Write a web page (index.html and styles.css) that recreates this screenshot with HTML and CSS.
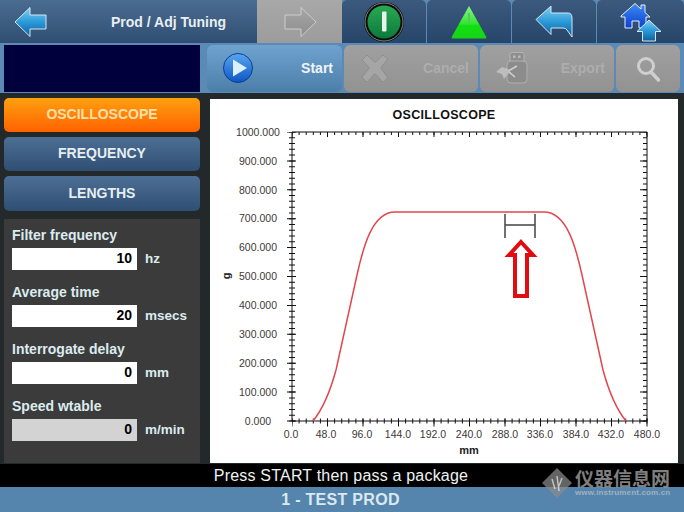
FILE: index.html
```html
<!DOCTYPE html>
<html lang="en">
<head>
  <meta charset="UTF-8">
  <title>Prod / Adj Tuning</title>
  <link rel="stylesheet" href="styles.css">
</head>
<body>
  <div class="screen">
    <svg class="defs" width="0" height="0">
      <defs>
        <linearGradient id="blueArrow" x1="0" y1="0" x2="0" y2="1">
          <stop offset="0" stop-color="#7fd0f5"/>
          <stop offset=".5" stop-color="#2b9ad8"/>
          <stop offset="1" stop-color="#0f5f9e"/>
        </linearGradient>
        <linearGradient id="greyArrow" x1="0" y1="0" x2="0" y2="1">
          <stop offset="0" stop-color="#a6a6a6"/>
          <stop offset="1" stop-color="#8e8e8e"/>
        </linearGradient>
        <linearGradient id="greenTri" x1="0" y1="0" x2="0" y2="1">
          <stop offset="0" stop-color="#8cf08c"/>
          <stop offset=".55" stop-color="#2ee82e"/>
          <stop offset=".6" stop-color="#12e012"/>
          <stop offset="1" stop-color="#16d416"/>
        </linearGradient>
        <linearGradient id="greenDisc" x1="0" y1="0" x2="0" y2="1">
          <stop offset="0" stop-color="#2aa855"/>
          <stop offset="1" stop-color="#0b7a3a"/>
        </linearGradient>
        <linearGradient id="playDisc" x1="0" y1="0" x2="0" y2="1">
          <stop offset="0" stop-color="#5aa6f0"/>
          <stop offset="1" stop-color="#0c56c4"/>
        </linearGradient>
        <linearGradient id="homeBlue" x1="0" y1="0" x2="0" y2="1">
          <stop offset="0" stop-color="#3f8cf2"/>
          <stop offset="1" stop-color="#0a3fd0"/>
        </linearGradient>
      </defs>
    </svg>

    <!-- Top navigation -->
    <div class="topbar">
      <div class="title-cell">
        <svg class="back-icon" width="34" height="32" viewBox="0 0 34 32">
          <path d="M1 16 16 1.500V9H32V23H16V30.500Z" fill="url(#blueArrow)" stroke="#d5e6f2" stroke-width="1"/>
        </svg>
        <span class="page-title">Prod / Adj Tuning</span>
      </div>
      <div class="grey-cell">
        <svg width="34" height="32" viewBox="0 0 34 32">
          <path d="M33 16 18 1.500V9H2V23H18V30.500Z" fill="url(#greyArrow)" stroke="#cdcdcd" stroke-width="1"/>
        </svg>
      </div>
      <div class="nav-cell">
        <svg width="42" height="42" viewBox="0 0 42 42">
          <circle cx="21" cy="21" r="20" fill="#0d0d0d"/>
          <circle cx="21" cy="21" r="19" fill="none" stroke="#9aa59d" stroke-width=".8"/>
          <circle cx="21" cy="21" r="16.500" fill="url(#greenDisc)"/>
          <rect x="19" y="10.500" width="4.500" height="20" rx="1" fill="#e9f4ec"/>
        </svg>
      </div>
      <div class="nav-cell">
        <svg class="tri-icon" width="36" height="34" viewBox="0 0 36 34">
          <path d="M18 1 35 31.500Q36 33.500 34 33.500H2Q0 33.500 1 31.500Z" fill="url(#greenTri)"/>
          <rect x="17" y="8" width="2" height="11" fill="#5cc45c"/>
        </svg>
      </div>
      <div class="nav-cell">
        <svg width="38" height="33" viewBox="0 0 38 33">
          <path d="M1 14.500 16 1V8H33Q37 8 37 13V32L32 25Q31 23 28 23H16V29.500Z" fill="url(#blueArrow)" stroke="#d5e6f2" stroke-width="1"/>
        </svg>
      </div>
      <div class="nav-cell nav-last">
        <svg width="42" height="40" viewBox="0 0 42 40">
          <path d="M1 14 15 1.500 21 7V3H25V10.500L30 15H26V26H19V19H12V26H5V15H1Z" fill="url(#homeBlue)" stroke="#e6eef8" stroke-width="1"/>
          <path d="M29 18 41 29.500H35.500V39H22.500V29.500H17Z" fill="url(#blueArrow)" stroke="#d5e6f2" stroke-width="1"/>
        </svg>
      </div>
    </div>

    <!-- Action toolbar -->
    <div class="toolbar">
      <div class="display-box"></div>
      <div class="tool tool-on">
        <svg width="30" height="30" viewBox="0 0 30 30">
          <circle cx="15" cy="15" r="14.500" fill="url(#playDisc)" stroke="#0b3f92" stroke-width="1"/>
          <path d="M10 6.500 24 15 10 23.500Z" fill="#dcf0fd"/>
        </svg>
        <span>Start</span>
      </div>
      <div class="tool">
        <svg width="32" height="32" viewBox="0 0 32 32">
          <path d="M3 8 8 3 16 10.500 24 3 29 7 21.500 16 29 26 24 30 16 21.500 8 30 3 25 10.500 16Z" fill="#a6a6a6" stroke="#8a8a8a" stroke-width=".8"/>
        </svg>
        <span>Cancel</span>
      </div>
      <div class="tool">
        <svg width="34" height="32" viewBox="0 0 34 32">
          <rect x="15" y="0.500" width="14" height="11" rx="2" fill="#8e8e8e" stroke="#b4b4b4"/>
          <rect x="18" y="3.500" width="2.500" height="2.500" fill="#b8b8b8"/>
          <rect x="23" y="3.500" width="2.500" height="2.500" fill="#b8b8b8"/>
          <rect x="12" y="9" width="20" height="22" rx="4" fill="#8c8c8c" stroke="#b0b0b0"/>
          <path d="M13 19 22 14M13 19 20 25" fill="none" stroke="#d2d2d2" stroke-width="1.500"/>
          <path d="M1 20 7 15 13 17 14 21 9 27 7 22Z" fill="#bdbdbd"/>
        </svg>
        <span>Export</span>
      </div>
      <div class="tool tool-icon">
        <svg width="24" height="28" viewBox="0 0 24 28">
          <circle cx="10" cy="11" r="7.500" fill="none" stroke="#cfcfcf" stroke-width="3"/>
          <path d="M15 17 22.500 25" stroke="#cfcfcf" stroke-width="3.500" stroke-linecap="round"/>
        </svg>
      </div>
    </div>

    <div class="main">
      <!-- Left column: tabs and settings -->
      <div class="sidebar">
        <div class="tab tab-active">OSCILLOSCOPE</div>
        <div class="tab">FREQUENCY</div>
        <div class="tab tab-last">LENGTHS</div>

        <div class="settings">
          <div class="field">
            <div class="field-label">Filter frequency</div>
            <div class="field-row">
              <div class="field-value">10</div>
              <span class="field-unit">hz</span>
            </div>
          </div>
          <div class="field">
            <div class="field-label">Average time</div>
            <div class="field-row">
              <div class="field-value">20</div>
              <span class="field-unit">msecs</span>
            </div>
          </div>
          <div class="field">
            <div class="field-label">Interrogate delay</div>
            <div class="field-row">
              <div class="field-value">0</div>
              <span class="field-unit">mm</span>
            </div>
          </div>
          <div class="field">
            <div class="field-label">Speed wtable</div>
            <div class="field-row">
              <div class="field-value field-readonly">0</div>
              <span class="field-unit">m/min</span>
            </div>
          </div>
        </div>
      </div>

      <!-- Chart: coordinates are page pixels shifted by the panel origin -->
      <div class="chart-panel">
        <svg class="chart" width="468" height="364" viewBox="210 99 468 364">
          <text class="chart-title" x="444" y="119">OSCILLOSCOPE</text>

          <g class="axis-y-labels">
            <text x="258" y="136">1000.000</text>
            <text x="258" y="165">900.000</text>
            <text x="258" y="194">800.000</text>
            <text x="258" y="222">700.000</text>
            <text x="258" y="251">600.000</text>
            <text x="258" y="280">500.000</text>
            <text x="258" y="309">400.000</text>
            <text x="258" y="338">300.000</text>
            <text x="258" y="367">200.000</text>
            <text x="258" y="396">100.000</text>
            <text x="258" y="425">0.000</text>
          </g>
          <g class="axis-x-labels">
            <text x="291" y="438">0.0</text>
            <text x="326" y="438">48.0</text>
            <text x="362" y="438">96.0</text>
            <text x="398" y="438">144.0</text>
            <text x="433" y="438">192.0</text>
            <text x="469" y="438">240.0</text>
            <text x="505" y="438">288.0</text>
            <text x="540" y="438">336.0</text>
            <text x="576" y="438">384.0</text>
            <text x="611" y="438">432.0</text>
            <text x="647" y="438">480.0</text>
          </g>
          <text class="axis-name" x="469" y="454">mm</text>
          <text class="axis-name" transform="translate(230 276) rotate(-90)">g</text>

          <!-- plot frame, ticks drawn as dashed strokes -->
          <path class="frame" d="M292 132H647V421H292Z"/>
          <line class="tick" x1="292" y1="133.500" x2="647" y2="133.500" stroke-width="3" stroke-dasharray="1 6.100" stroke-dashoffset=".5"/>
          <line class="tick" x1="292" y1="134.500" x2="648" y2="134.500" stroke-width="5" stroke-dasharray="1 34.500" stroke-dashoffset=".5"/>
          <line class="tick" x1="292" y1="421" x2="648" y2="421" stroke-width="5" stroke-dasharray="1 6.100" stroke-dashoffset=".5"/>
          <line class="tick" x1="292" y1="422.500" x2="648" y2="422.500" stroke-width="8" stroke-dasharray="1 34.500" stroke-dashoffset=".5"/>
          <line class="tick" x1="292" y1="132" x2="292" y2="422" stroke-width="6" stroke-dasharray="1 4.780" stroke-dashoffset=".5"/>
          <line class="tick" x1="291.500" y1="132" x2="291.500" y2="422" stroke-width="9" stroke-dasharray="1 27.900" stroke-dashoffset=".5"/>
          <line class="tick" x1="645" y1="132" x2="645" y2="422" stroke-width="4" stroke-dasharray="1 4.780" stroke-dashoffset=".5"/>
          <line class="tick" x1="643.500" y1="132" x2="643.500" y2="422" stroke-width="7" stroke-dasharray="1 27.900" stroke-dashoffset=".5"/>

          <path class="curve" d="M313 421C322 410 330 392 336 370L357 275C363 248 372 212 395 212H544C567 212 576 248 582 275L603 370C609 392 617 410 626 421"/>

          <path class="marker" d="M505 214V238M535 214V238M505 225H535"/>
          <path class="arrow-mark" d="M521 242 533 255H527V296H515V255H509Z"/>
        </svg>
      </div>
    </div>

    <div class="status">Press START then pass a package</div>
    <div class="footer">1 - TEST PROD</div>

    <!-- Watermark laid over the bottom bars -->
    <div class="watermark">
      <svg width="30" height="30" viewBox="0 0 30 30">
        <path d="M15 0 30 15 15 30 0 15Z" fill="#8b8b8b" fill-opacity=".8"/>
        <path d="M10 11 13 21M15 8 17 23M20 10 17 18" fill="none" stroke="#d8d8d8" stroke-width="1.500"/>
      </svg>
      <div class="watermark-text">
        <div class="watermark-cn">仪器信息网</div>
        <div class="watermark-url">www.instrument.com.cn</div>
      </div>
    </div>
  </div>
</body>
</html>
```

FILE: styles.css
```css
html, body {
  margin: 0;
  padding: 0;
  width: 100%;
  height: 100%;
  overflow: hidden;
  background: #000;
}

.screen {
  position: relative;
  display: flex;
  flex-direction: column;
  width: 684px;
  height: 512px;
  overflow: hidden;
  font-family: "Liberation Sans", Arial, sans-serif;
}

.defs {
  position: absolute;
}

/* Top navigation */
.topbar {
  display: flex;
  height: 43px;
  flex: none;
  background: #5a8ab5;
}

.title-cell {
  display: flex;
  align-items: center;
  width: 257px;
  box-sizing: border-box;
  padding-left: 14px;
  background: linear-gradient(#4b6c91, #2f4e72);
}

.back-icon {
  flex: none;
}

.page-title {
  margin-left: 63px;
  color: #e8eef2;
  font-size: 14px;
  font-weight: bold;
}

.grey-cell {
  display: flex;
  align-items: center;
  justify-content: center;
  width: 85px;
  background: linear-gradient(#a8a8a8, #9c9c9c);
}

.nav-cell {
  display: flex;
  align-items: center;
  justify-content: center;
  width: 84px;
  margin-right: 1px;
  border-radius: 5px 5px 0 0;
  background: linear-gradient(#3c5a7d, #26456a);
}

.nav-last {
  width: 87px;
  margin-right: 0;
}

.tri-icon {
  margin-top: 1px;
}

/* Action toolbar */
.toolbar {
  display: flex;
  gap: 2px;
  height: 50px;
  flex: none;
  box-sizing: border-box;
  padding: 2px 4px 1px;
  background: #5a8ab5;
}

.display-box {
  width: 196px;
  margin-right: 5px;
  background: #00003c;
}

.tool {
  display: flex;
  align-items: center;
  justify-content: space-between;
  width: 134px;
  box-sizing: border-box;
  padding: 0 9px 1px 15px;
  border-radius: 6px;
  background: linear-gradient(#a0a0a0, #929292);
  color: #adadad;
  font-size: 14px;
  font-weight: bold;
}

.tool-on {
  width: 135px;
  padding-left: 16px;
  background: linear-gradient(#6fa3cf, #4c7ea9);
  color: #eef4f8;
}

.tool-icon {
  justify-content: center;
  width: 64px;
  padding: 0;
}

/* Main area */
.main {
  display: flex;
  height: 371px;
  flex: none;
  background: #23282b;
}

.sidebar {
  display: flex;
  flex-direction: column;
  gap: 5px;
  width: 196px;
  margin: 5px 10px 0 4px;
}

.tab {
  height: 34px;
  flex: none;
  border-radius: 5px;
  background: linear-gradient(#4e6f95, #2e4e72);
  color: #e6edf1;
  font-size: 14px;
  font-weight: bold;
  line-height: 32px;
  text-align: center;
}

.tab-last {
  height: 35px;
  line-height: 34px;
}

.tab-active {
  background: linear-gradient(#ffa010, #ff6200);
  color: #fde0a8;
}

.settings {
  flex: 1;
  margin: 3px 0 1px;
  padding-top: 7px;
  background: #3b3b3b;
}

.field {
  height: 57px;
  padding-left: 8px;
}

.field-label {
  height: 22px;
  color: #dcebef;
  font-size: 14px;
  font-weight: bold;
  line-height: 18px;
}

.field-row {
  display: flex;
  align-items: center;
  gap: 8px;
}

.field-value {
  width: 125px;
  height: 22px;
  box-sizing: border-box;
  padding-right: 5px;
  background: #fff;
  color: #000;
  font-size: 14px;
  font-weight: bold;
  line-height: 21px;
  text-align: right;
}

.field-readonly {
  background: #d3d3d3;
}

.field-unit {
  padding-bottom: 2px;
  color: #dcebef;
  font-size: 13.500px;
  font-weight: bold;
}

/* Chart */
.chart-panel {
  width: 468px;
  height: 364px;
  margin-top: 6px;
  background: #fff;
}

.chart {
  display: block;
}

.chart-title {
  fill: #111;
  font-size: 12.500px;
  font-weight: bold;
  letter-spacing: .3px;
  text-anchor: middle;
}

.axis-y-labels text,
.axis-x-labels text {
  fill: #3d3838;
  font-size: 10.500px;
  text-anchor: middle;
}

.axis-name {
  fill: #222;
  font-size: 11px;
  font-weight: bold;
  text-anchor: middle;
}

.frame {
  fill: none;
  stroke: #111;
  stroke-width: 1;
}

.tick {
  stroke: #111;
}

.curve {
  fill: none;
  stroke: #e0474d;
  stroke-width: 1.500;
}

.marker {
  fill: none;
  stroke: #444;
  stroke-width: 1.500;
}

.arrow-mark {
  fill: #fff;
  stroke: #e00c12;
  stroke-width: 4;
}

/* Bottom bars */
.status {
  height: 23px;
  flex: none;
  padding-right: 2px;
  background: #000;
  color: #eef2f2;
  font-size: 16px;
  letter-spacing: .2px;
  line-height: 24px;
  text-align: center;
}

.footer {
  flex: 1;
  padding-right: 3px;
  background: #5585ad;
  color: #dbe9ef;
  font-size: 16px;
  font-weight: bold;
  letter-spacing: .3px;
  line-height: 25px;
  text-align: center;
}

.watermark {
  position: absolute;
  top: 468px;
  left: 542px;
  display: flex;
  gap: 3px;
  opacity: .9;
}

.watermark-cn {
  height: 21px;
  color: #8d8d8d;
  font-family: "Noto Sans CJK SC", sans-serif;
  font-size: 19px;
  font-weight: bold;
  line-height: 20px;
}

.watermark-url {
  color: #a9b7c2;
  font-size: 8px;
  font-weight: bold;
  letter-spacing: .15px;
  line-height: 8px;
}
```
